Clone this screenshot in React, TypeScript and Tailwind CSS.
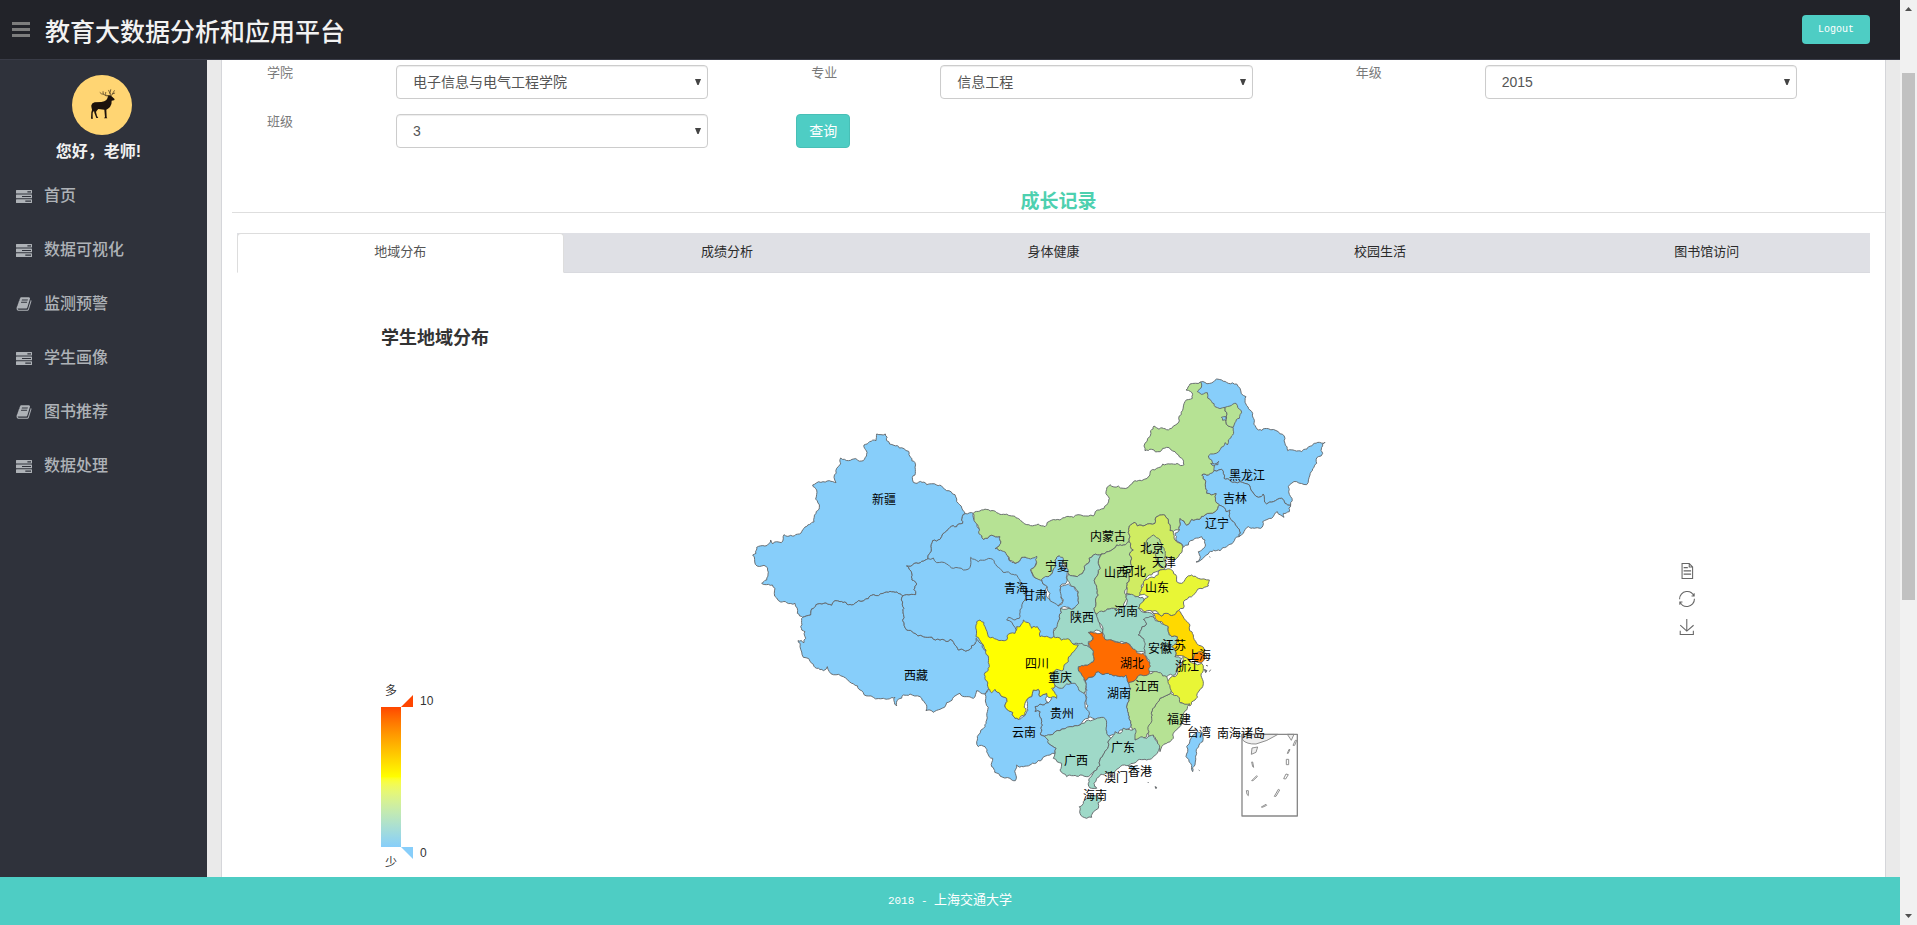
import React from "react";

type Frame = "w" | "e" | "ne" | "s";
type Region = { name: string; frame: Frame; fill: string; points: string };

// Survey sheets: every region is digitised on one of four sheets, three units per pixel.
const sheets: Record<Frame, [number, number]> = {
  w: [0, 180],
  e: [660, 360],
  ne: [1140, 0],
  s: [1230, 600],
};

const BLUE = "#87cefa";
const GREEN = "#b6e294";
const TEAL = "#9fd9c8";
const HEBEI = "#d0ec62";
const LIME = "#e8f636";

const regions: Region[] = [
  { name: "xinjiang", frame: "w", fill: BLUE, points: "410,42 436,42 440,62 462,76 478,84 492,86 506,94 512,112 525,128 526,155 517,172 520,187 560,194 590,195 620,212 645,224 655,250 668,270 676,281 667,290 668,310 650,320 630,322 608,342 600,358 578,362 574,385 564,416 545,424 500,438 508,448 516,462 516,480 530,492 522,508 527,524 500,524 488,528 450,514 430,520 400,524 385,536 355,542 335,555 300,545 285,542 275,556 228,554 212,585 188,592 172,580 165,550 140,548 110,534 105,505 85,493 65,490 80,480 72,436 46,433 38,405 48,400 50,382 92,360 98,372 124,368 132,344 152,346 222,306 228,280 238,262 230,210 218,195 268,182 288,188 282,172 290,145 302,114 325,122 370,122 376,112 372,75 408,62" },
  { name: "xizang", frame: "w", fill: BLUE, points: "188,592 212,585 228,554 275,556 285,542 300,545 335,555 355,542 385,536 400,524 430,520 450,514 488,528 484,540 492,565 488,602 500,630 520,638 550,650 600,660 625,664 630,658 650,680 655,690 690,688 705,672 708,650 730,655 760,700 770,800 750,805 735,822 710,812 700,835 660,820 638,835 620,848 600,868 558,872 555,850 540,830 510,822 490,825 475,838 470,858 464,852 465,832 430,835 400,832 385,828 365,812 335,790 310,770 262,740 250,752 215,730 190,712 180,680 174,662 192,668 197,655 182,620 185,595" },
  { name: "gansu", frame: "w", fill: BLUE, points: "564,416 574,385 578,362 600,358 608,342 630,322 650,320 668,310 667,290 676,281 700,280 715,325 730,358 780,350 782,372 765,386 800,404 825,430 845,412 865,412 885,402 893,410 888,430 872,450 880,470 905,478 922,500 930,540 955,558 970,540 958,520 962,500 985,492 1015,515 1016,550 995,570 962,565 958,590 940,640 944,670 880,680 830,670 790,640 720,560 600,480" },
  { name: "qinghai", frame: "w", fill: BLUE, points: "500,438 545,424 564,416 580,414 590,428 620,432 640,445 670,450 690,442 692,412 715,425 740,418 775,442 810,460 840,480 862,510 855,540 840,570 838,595 825,600 805,592 800,600 825,622 828,638 835,680 800,700 750,700 728,672 708,655 705,672 690,688 655,690 650,680 630,658 625,664 600,660 550,650 520,638 500,630 488,602 492,565 484,540 488,528 500,524 527,524 522,508 530,492 516,480 516,462 508,448" },
  { name: "heilongjiang", frame: "ne", fill: BLUE, points: "242,66 290,57 305,60 325,70 350,72 360,85 378,110 390,150 398,160 408,202 445,206 475,215 495,235 495,250 503,272 545,275 575,258 615,247 605,262 608,280 595,290 590,310 570,345 560,374 530,365 505,380 512,410 512,435 495,430 485,415 460,425 440,432 430,402 415,412 402,402 388,375 360,365 330,362 312,355 305,328 285,332 270,328 255,288 300,200 262,130 225,92" },
  { name: "jilin", frame: "ne", fill: BLUE, points: "245,345 265,345 285,332 305,328 312,355 330,362 360,365 388,375 402,402 415,412 430,402 440,432 460,425 485,415 495,430 512,435 508,455 490,460 492,472 472,455 455,475 428,485 422,505 385,500 370,520 357,530 345,490 330,450 318,455 298,435 288,400 260,400 257,365" },
  { name: "liaoning", frame: "ne", fill: BLUE, points: "298,435 318,455 330,450 345,490 357,530 320,560 300,572 265,582 240,602 228,606 240,595 235,575 255,560 255,540 245,530 225,535 205,555 190,562 168,540 165,520 178,510 180,475 200,495 215,478 255,465 285,455" },
  { name: "neimenggu", frame: "e", fill: GREEN, points: "40,100 120,103 160,108 190,128 235,132 255,140 300,120 340,112 400,108 440,75 448,55 438,35 450,14 475,18 505,22 525,2 545,2 570,-20 590,-35 630,-48 672,-46 665,-65 645,-85 620,-98 600,-85 575,-92 555,-88 552,-102 582,-162 615,-154 635,-155 658,-177 656,-185 675,-235 697,-245 692,-265 678,-270 690,-288 722,-294 725,-282 712,-265 730,-258 742,-262 755,-235 765,-220 795,-218 798,-175 805,-162 820,-155 818,-135 805,-120 802,-105 795,-112 745,-72 755,-60 762,-35 745,-15 725,-15 737,5 740,40 768,40 778,75 765,95 735,105 695,118 680,135 660,115 658,150 640,155 630,152 625,130 615,106 595,108 585,130 555,136 532,138 525,127 512,135 510,170 508,185 470,195 445,215 425,222 400,225 385,250 370,275 352,290 325,282 322,270 308,250 298,228 285,240 285,262 262,290 235,298 215,275 212,268 230,248 230,228 205,235 185,232 165,250 140,225 110,205 122,190 120,170 70,178 55,140" },
  { name: "elunchun", frame: "ne", fill: GREEN, points: "315,142 330,138 348,130 364,152 358,175 345,188 340,202 325,198 318,185" },
  { name: "jiagedaqi", frame: "ne", fill: BLUE, points: "304,172 318,170 318,182 308,181" },
  { name: "zhalaite", frame: "ne", fill: BLUE, points: "272,310 284,312 296,304 294,314 282,318" },
  { name: "ningxia", frame: "e", fill: BLUE, points: "245,298 262,290 285,262 285,240 298,228 308,232 308,250 325,270 322,300 315,312 300,318 302,340 308,365 295,378 270,362 262,320" },
  { name: "shaanxi", frame: "e", fill: TEAL, points: "400,225 425,222 415,250 415,280 405,310 415,345 408,370 408,402 415,420 420,435 428,460 390,455 398,478 385,485 385,500 350,500 330,490 280,475 280,455 298,410 302,385 335,388 356,370 355,335 330,312 322,300 325,282 352,290 370,275 385,250" },
  { name: "shanxi", frame: "e", fill: GREEN, points: "425,222 445,215 470,195 508,185 520,210 508,225 512,250 515,265 505,280 508,300 500,320 498,345 495,365 490,380 455,385 430,395 408,402 408,370 415,345 405,310 415,280 415,250" },
  { name: "hebei", frame: "e", fill: HEBEI, points: "512,135 525,127 532,138 555,136 585,130 595,108 615,106 625,130 630,152 640,155 645,180 668,200 655,230 635,240 620,230 615,245 618,262 600,270 575,285 555,300 545,325 540,345 500,342 500,320 508,300 505,280 515,265 512,250 508,225 520,210 508,185 510,170" },
  { name: "beijing", frame: "e", fill: GREEN, points: "580,165 600,180 605,200 590,218 565,215 555,198 560,182" },
  { name: "tianjin", frame: "e", fill: GREEN, points: "605,200 616,215 612,235 618,258 602,262 590,242 590,218" },
  { name: "henan", frame: "e", fill: TEAL, points: "500,340 520,345 548,352 550,365 535,385 555,398 580,405 582,415 550,418 560,432 540,455 535,465 552,478 555,520 530,515 515,500 500,488 470,485 435,478 428,460 410,402 430,395 455,385 490,380" },
  { name: "anhui", frame: "e", fill: TEAL, points: "552,418 578,410 600,425 625,440 625,455 635,470 652,470 655,490 635,500 645,530 665,535 652,560 645,585 620,590 590,585 580,575 565,575 565,550 560,530 555,515 552,478 535,465 540,455 560,432" },
  { name: "jiangsu", frame: "e", fill: "#ffd900", points: "575,395 605,408 620,400 640,405 655,390 672,415 690,435 700,465 710,490 733,510 735,520 725,540 700,535 670,528 645,530 635,500 650,490 652,470 635,470 625,455 625,440 605,425 585,415" },
  { name: "shandong", frame: "e", fill: LIME, points: "540,345 548,320 555,300 600,270 635,270 650,290 650,305 665,310 695,285 715,295 748,300 745,318 720,325 700,345 675,360 670,385 655,392 640,405 620,400 605,408 585,392 555,395 535,385 548,365 565,350" },
  { name: "zhejiang", frame: "e", fill: LIME, points: "655,560 668,530 690,545 700,550 725,550 730,565 730,610 712,640 705,660 690,678 665,668 650,665 640,640 622,605 645,590" },
  { name: "shanghai", frame: "e", fill: "#ff8400", points: "705,520 725,515 735,535 728,545 708,545 700,535" },
  { name: "fujian", frame: "e", fill: GREEN, points: "632,640 655,650 660,668 690,672 680,690 670,710 660,740 640,760 620,790 600,815 592,785 565,765 562,745 575,715 585,680 600,655" },
  { name: "jiangxi", frame: "e", fill: GREEN, points: "505,608 530,595 545,585 580,575 620,590 625,610 632,640 600,655 585,680 575,715 560,770 525,778 522,755 512,740 505,700 505,650 512,625" },
  { name: "hunan", frame: "e", fill: BLUE, points: "375,602 400,590 415,575 445,580 480,590 498,585 505,608 512,625 505,650 505,700 512,740 490,745 475,760 455,765 440,770 440,755 435,740 430,715 385,712 380,690 378,640" },
  { name: "hubei", frame: "e", fill: "#ff6c00", points: "385,457 428,458 435,478 470,487 500,488 515,503 530,518 550,520 562,540 568,580 545,585 530,595 505,608 498,585 480,590 445,580 415,575 400,590 375,602 365,585 355,560 375,555 400,545 400,515 385,490 400,478" },
  { name: "guizhou", frame: "e", fill: BLUE, points: "225,680 240,672 265,668 275,655 270,635 290,615 320,605 345,605 372,640 378,660 382,690 385,715 360,735 330,740 320,748 300,752 270,765 255,770 242,765 245,725 240,695 225,695" },
  { name: "chongqing", frame: "e", fill: TEAL, points: "345,490 385,500 400,515 400,545 375,555 355,560 365,585 375,605 372,640 355,625 345,610 320,612 305,625 290,620 278,605 262,585 285,555 305,560 318,540 325,515" },
  { name: "guangxi", frame: "e", fill: TEAL, points: "250,772 270,765 300,752 330,740 360,735 385,720 430,712 440,755 452,775 445,800 420,840 410,870 385,890 360,885 320,890 300,870 305,850 280,835 285,820 288,805 265,790" },
  { name: "guangdong", frame: "e", fill: TEAL, points: "452,775 465,755 480,760 490,745 525,745 525,780 560,775 580,765 592,785 592,820 560,840 520,850 470,868 440,880 410,895 402,910 410,925 395,925 385,910 392,892 410,870 420,840 445,800" },
  { name: "hainan", frame: "e", fill: TEAL, points: "370,965 390,950 410,945 425,955 415,985 395,1012 380,1015 360,1000 358,980" },
  { name: "yunnan", frame: "e", fill: BLUE, points: "90,620 105,628 140,655 165,715 175,718 198,700 200,660 215,650 220,630 235,628 240,650 260,640 265,668 240,672 225,680 225,695 240,695 245,725 242,765 265,790 288,805 285,820 270,825 245,840 210,855 170,855 166,880 166,902 150,895 120,888 95,860 98,835 75,800 55,800 50,785 55,765 75,740 80,720 78,670 75,642" },
  { name: "sichuan", frame: "e", fill: "#ffff00", points: "48,435 50,425 60,420 75,440 85,470 110,478 140,480 150,460 165,460 170,440 180,440 190,420 205,428 215,445 232,440 240,470 280,470 330,480 355,495 335,520 325,545 310,570 290,568 270,590 278,605 285,620 275,625 285,640 290,655 265,652 260,640 240,650 235,628 220,630 215,650 200,660 195,705 175,718 165,715 140,655 105,628 95,638 88,560 78,510 65,490 48,470" },
  { name: "taiwan", frame: "e", fill: BLUE, points: "712,755 730,760 728,785 710,820 705,855 698,875 692,850 678,830 680,800 690,780" },
  { name: "xianggang", frame: "e", fill: BLUE, points: "506,858 516,856 522,864 510,866" },
];

const labels: [string, Frame, number, number][] = [
  ["新疆", "w", 431, 239],
  ["西藏", "w", 529, 767],
  ["黑龙江", "ne", 381, 347],
  ["吉林", "ne", 345, 416],
  ["辽宁", "ne", 291, 493],
  ["内蒙古", "e", 443, 170],
  ["宁夏", "e", 291, 260],
  ["青海", "e", 168, 326],
  ["甘肃", "e", 226, 348],
  ["陕西", "e", 366, 415],
  ["山西", "e", 468, 280],
  ["河北", "e", 522, 275],
  ["北京", "e", 577, 206],
  ["天津", "e", 613, 248],
  ["山东", "e", 592, 325],
  ["河南", "e", 497, 397],
  ["安徽", "e", 600, 507],
  ["江苏", "e", 642, 497],
  ["上海", "e", 718, 527],
  ["浙江", "e", 681, 562],
  ["湖北", "e", 516, 551],
  ["江西", "e", 560, 622],
  ["湖南", "e", 478, 641],
  ["重庆", "e", 299, 594],
  ["四川", "e", 231, 551],
  ["贵州", "e", 306, 701],
  ["云南", "e", 192, 759],
  ["广西", "e", 348, 842],
  ["广东", "e", 488, 803],
  ["福建", "e", 657, 719],
  ["台湾", "e", 717, 759],
  ["南海诸岛", "e", 842, 761],
  ["香港", "e", 540, 876],
  ["澳门", "e", 467, 893],
  ["海南", "e", 404, 947],
];

type Pt = [number, number];

// Splits an edge into short uneven steps; the offset depends only on the edge's
// two ends, so neighbouring regions get the same border.
function roughen(a: Pt, b: Pt, out: Pt[]) {
  const swap = a[0] > b[0] || (a[0] === b[0] && a[1] > b[1]);
  const [p, q] = swap ? [b, a] : [a, b];
  const dx = q[0] - p[0];
  const dy = q[1] - p[1];
  const length = Math.hypot(dx, dy);
  if (length < 9) {
    out.push(b);
    return;
  }
  const seed = Math.sin(p[0] * 12.9898 + p[1] * 78.233 + q[0] * 37.719 + q[1] * 4.581) * 43758.5453;
  const offset = (seed - Math.floor(seed) - 0.5) * 0.42;
  const mid: Pt = [(p[0] + q[0]) / 2 - dy * offset, (p[1] + q[1]) / 2 + dx * offset];
  roughen(a, mid, out);
  roughen(mid, b, out);
}

function outline({ frame, points }: Region) {
  const [ox, oy] = sheets[frame];
  const corners = points.split(" ").map((pair) => {
    const [x, y] = pair.split(",").map(Number);
    return [x + ox, y + oy] as Pt;
  });
  const out: Pt[] = [];
  corners.forEach((corner, i) => roughen(corner, corners[(i + 1) % corners.length], out));
  return "M" + out.map(([x, y]) => `${x.toFixed(1)} ${y.toFixed(1)}`).join("L") + "Z";
}

function ChinaMap() {
  return (
    <svg viewBox="0 0 600 470" className="h-[470px] w-[600px] shrink-0" role="img" aria-label="学生地域分布">
      <g transform="scale(0.33333)" stroke="#63676a" strokeWidth="2.8" strokeLinejoin="round">
        {regions.map((region) => (
          <path key={region.name} d={outline(region)} fill={region.fill} />
        ))}
        <g transform="translate(660 360)" fill="#777">
          <path d="M733 568l8 4-4 6zM738 556l6 2M748 575l4-6M716 870l3 2M563 906l3 3M585 920l5 2-2 4zM748 230l3 2" />
        </g>
        <g transform="translate(1230 600)" fill="none" stroke="#888">
          <path d="M276 523L278 540Q290 553 318 552Q350 545 384 523Z" fill="#eee" />
          <path d="M412 523L424 541L432 523Z" fill="#eee" />
          <path d="M306 564L323 561L318 577L304 583Z" fill="#eee" />
          <path d="M276 523H442V768H276Z" strokeWidth="4" />
          <path d="M429 556L436 541L440 541L434 556ZM412 580L417 568L420 569L414 581ZM409 598H416V614H409ZM401 656L408 642L415 644L407 657ZM373 709L385 688L389 690L378 709ZM334 741L348 733L350 736L337 742ZM289 692H295V707L291 703ZM305 662L320 647L322 650L309 662ZM305 606L308 606L311 622L308 620Z" />
        </g>
      </g>
      <g fontSize="12" fill="#000" textAnchor="middle">
        {labels.map(([text, frame, x, y]) => (
          <text key={text} x={Math.round((sheets[frame][0] + x) / 3)} y={Math.round((sheets[frame][1] + y) / 3) + 4}>
            {text}
          </text>
        ))}
      </g>
    </svg>
  );
}

function TasksIcon() {
  return (
    <svg viewBox="0 0 16 13" className="h-[13px] w-4" fill="currentColor">
      <path fillRule="evenodd" d="M.5 0h15q.5 0 .5.5v2.6q0 .5-.5.5H.5q-.5 0-.5-.5V.5Q0 0 .5 0ZM11.4 1.2v1.2H15V1.2ZM.5 4.6h15q.5 0 .5.5v2.7q0 .5-.5.5H.5q-.5 0-.5-.5V5.1q0-.5.5-.5ZM6 5.9V7h9V5.9ZM.5 9.3h15q.5 0 .5.5v2.6q0 .5-.5.5H.5q-.5 0-.5-.5V9.8q0-.5.5-.5ZM9.3 10.5v1.2H15v-1.2Z" />
    </svg>
  );
}

function BookIcon() {
  return (
    <svg viewBox="0 0 1792 1792" className="size-4" fill="currentColor">
      <path d="M1703 478q40 57 18 129l-275 906q-19 64-76.5 107.5T1247 1664H324q-77 0-148.5-53.5T76 1479q-24-67-2-127 0-4 3-27t4-37q1-8-3-21.5t-3-19.5q2-11 8-21t16.5-23.5T116 1179q23-38 45-91.5t30-91.5q3-10 .5-30t-.5-28q3-11 17-28t17-23q21-36 42-92t25-90q1-9-2.5-32t.5-28q4-13 22-30.5t22-22.5q19-26 42.5-84.5T404 411q1-8-3-25.5t-2-26.5q2-8 9-18t18-23 17-21q8-12 16.5-30.5t15-35 16-36 19.5-32 26.5-23.5 36-11.5T620 134l-1 3q38-9 51-9h761q74 0 114 56t18 130l-274 906q-36 119-71.5 153.5T1089 1408H220q-27 0-38 15-11 16-1 43 24 70 144 70h923q29 0 56-15.5t35-41.5l300-987q7-22 5-57 38 15 59 43zm-1064 2q-4 13 2 22.5t20 9.5h608q13 0 25.5-9.5T1311 480l21-64q4-13-2-22.5t-20-9.5H702q-13 0-25.5 9.5T660 416zm-83 256q-4 13 2 22.5t20 9.5h608q13 0 25.5-9.5T1228 736l21-64q4-13-2-22.5t-20-9.5H619q-13 0-25.5 9.5T577 672z" />
    </svg>
  );
}

function Avatar() {
  return (
    <svg viewBox="0 0 180 180" className="ml-[7px] size-[60px]" role="img" aria-label="头像">
      <circle cx="90" cy="90" r="90" fill="#ffd573" />
      <path
        fill="#1c120c"
        d="M58 91Q60 84 68 82L88 81Q98 80 103 75Q107 70 108 64L104 62L110 61Q114 60 117 62L127 71Q129 74 126 76L119 77Q120 88 114 96Q109 101 103 104L104 127L106 130H96L99 126L97 104L79 102Q74 106 72 111L75 123L79 129H73L67 113L66 107L62 113L62 127L63 131H57L58 112Q61 103 60 95L58 104Z"
      />
      <path d="M110 63Q100 64 95 58Q88 58 84 53M95 58Q92 55 93 50M102 62Q99 56 101 52M115 62Q113 53 116 44M117 62Q122 54 128 54M114 56L110 46M121 57L127 47" fill="none" stroke="#4c3920" strokeWidth="2.2" strokeLinecap="round" />
    </svg>
  );
}

const menu = [
  { text: "首页", icon: <TasksIcon /> },
  { text: "数据可视化", icon: <TasksIcon /> },
  { text: "监测预警", icon: <BookIcon /> },
  { text: "学生画像", icon: <TasksIcon /> },
  { text: "图书推荐", icon: <BookIcon /> },
  { text: "数据处理", icon: <TasksIcon /> },
];

function Field({ id, label, value }: { id: string; label: string; value: string }) {
  return (
    <div className="flex items-start pr-[68px] pl-[35px]">
      <label htmlFor={id} className="w-[129px] shrink-0 text-[13px] leading-4 text-[#797979]">
        {label}
      </label>
      <div className="relative flex-1">
        <select
          id={id}
          defaultValue={value}
          className="block h-[34px] w-full appearance-none rounded border border-[#ccc] bg-white pl-4 text-sm text-[#555] shadow-[inset_0_1px_1px_rgba(0,0,0,0.075)]"
        >
          <option>{value}</option>
        </select>
        <svg viewBox="0 0 6 6" className="pointer-events-none absolute top-[14px] right-[7px] size-[6px]" fill="#444">
          <path d="M0 0H6L3.6 6H2.4Z" />
        </svg>
      </div>
    </div>
  );
}

const tabs = ["地域分布", "成绩分析", "身体健康", "校园生活", "图书馆访问"];

const tools = [
  { name: "数据视图", d: "M17.5,17.3H33 M45.4,29.5h-28 M11.5,2v56H51V14.8L38.4,2H11.5z M38.4,2.2v12.7H51 M45.4,41.7h-28" },
  { name: "还原", d: "M47,18.9h9.8V8.7 M56.3,20.1 C52.1,9,40.5,0.6,26.8,2.1C12.6,3.7,1.6,16.2,2.1,30.6 M13,41.1H3.1v10.2 M3.7,39.9c4.2,11.1,15.8,19.5,29.5,18 c14.2-1.6,25.2-14.1,24.7-28.5" },
  { name: "保存为图片", d: "M4.7,22.9L29.3,45.5L54.7,23.4M4.6,43.6L4.6,58L53.8,58L53.8,43.6M29.2,45.1L29.2,0" },
];

function ScaleLegend() {
  return (
    <div className="mt-auto mb-[6px] flex text-xs text-[#333]">
      <div className="flex w-5 flex-col items-center">
        <span className="leading-4">多</span>
        <div className="my-2 h-[140px] w-5 bg-linear-to-t from-[#87cefa] via-[#ffff00] to-[#ff4500]" />
        <span className="leading-4">少</span>
      </div>
      <div className="flex flex-col justify-between py-3">
        <div className="flex h-3 items-center gap-[7px]">
          <svg viewBox="0 0 12 12" className="size-3" fill="#ff4500">
            <path d="M0 12L12 0V12Z" />
          </svg>
          <span>10</span>
        </div>
        <div className="flex h-3 items-center gap-[7px]">
          <svg viewBox="0 0 12 12" className="size-3" fill="#87cefa">
            <path d="M0 0H12V12Z" />
          </svg>
          <span>0</span>
        </div>
      </div>
    </div>
  );
}

export default function App() {
  return (
    <div className="flex h-screen overflow-hidden bg-[#eaeaea] font-['Liberation_Sans','Noto_Sans_CJK_SC',sans-serif]">
      <div className="flex min-w-0 flex-1 flex-col">
        <header className="flex h-[60px] shrink-0 items-center border-b border-[#393b46] bg-[#222329] pr-[30px] pl-3">
          <button aria-label="菜单" className="text-[#7d7d7d]">
            <svg viewBox="0 0 18 15" className="h-[15px] w-[18px]" fill="currentColor">
              <path d="M0 0h18v3H0zM0 6h18v3H0zM0 12h18v3H0z" />
            </svg>
          </button>
          <h1 className="ml-[15px] pt-1 text-[25px] leading-8 font-medium text-[#f2f2f2]">教育大数据分析和应用平台</h1>
          <button className="ml-auto h-[29px] w-[68px] rounded bg-[#4ecdc4] font-['Liberation_Mono',monospace] text-[10px] text-white">
            Logout
          </button>
        </header>

        <div className="flex min-h-0 flex-1">
          <aside className="w-[207px] shrink-0 bg-[#2f323b]">
            <div className="flex w-[197px] flex-col items-center pt-[15px]">
              <Avatar />
              <p className="mt-[7px] text-base leading-5 font-bold text-[#f2f2f2]">您好，老师!</p>
            </div>
            <nav className="mt-[7px]">
              {menu.map(({ text, icon }) => (
                <a key={text} href="#" className="flex h-[54px] items-center pl-4 text-base font-medium text-[#aeb2b7]">
                  <span className="flex w-[28px]">{icon}</span>
                  {text}
                </a>
              ))}
            </nav>
          </aside>

          <main className="mx-[14px] flex min-w-0 flex-1 flex-col border-x border-[#d5d6da] bg-white">
            <form className="mr-[20px] ml-[10px] grid grid-cols-3 gap-y-[15px] pt-[5px]" onSubmit={(e) => e.preventDefault()}>
              <Field id="college" label="学院" value="电子信息与电气工程学院" />
              <Field id="major" label="专业" value="信息工程" />
              <Field id="grade" label="年级" value="2015" />
              <Field id="class" label="班级" value="3" />
              <div className="pl-5">
                <button className="h-[34px] w-[54px] rounded border border-[#48bfb6] bg-[#4ecdc4] text-sm text-white">查询</button>
              </div>
            </form>

            <h2 className="mt-11 ml-[10px] border-b border-[#dedede] text-center text-[19px] leading-5 font-bold text-[#4dd0af]">
              成长记录
            </h2>

            <div role="tablist" className="mx-[15px] mt-5 grid h-10 shrink-0 grid-cols-5 bg-[#dfe0e5] text-[13px] text-[#2a2a2a]">
              {tabs.map((tab, i) => (
                <button
                  key={tab}
                  role="tab"
                  aria-selected={i === 0}
                  className={
                    i === 0
                      ? "rounded-t-sm border border-[#ddd] border-b-white bg-white pb-[2px] text-[#555]"
                      : "border-y border-t-[#dfe0e5] border-b-[#d9dadf] pb-[2px]"
                  }
                >
                  {tab}
                </button>
              ))}
            </div>

            <section className="mr-[190px] ml-[159px] flex min-h-0 flex-1">
              <div className="flex w-[359px] shrink-0 flex-col">
                <h3 className="mt-[53px] text-lg leading-6 font-bold text-[#333]">学生地域分布</h3>
                <ScaleLegend />
              </div>
              <div className="pt-[87px]">
                <ChinaMap />
              </div>
              <div className="ml-auto flex flex-col gap-3 pt-[290px]">
                {tools.map(({ name, d }) => (
                  <button key={name} aria-label={name} className="size-4">
                    <svg viewBox="0 0 60 60" className="size-4 overflow-visible" fill="none" stroke="#666" strokeWidth="4">
                      <path d={d} />
                    </svg>
                  </button>
                ))}
              </div>
            </section>
          </main>
        </div>

        <footer className="flex h-12 shrink-0 items-center justify-center bg-[#4ecdc4] font-['Liberation_Mono','Noto_Sans_CJK_SC',monospace] text-[13px] text-white">
          <p>
            <span className="text-[11px]">2018 - </span>上海交通大学
          </p>
        </footer>
      </div>

      <div className="flex w-[17px] shrink-0 flex-col items-center bg-[#f1f1f1] py-[7px]">
        <svg viewBox="0 0 7 4" className="h-1 w-[7px]" fill="#505050">
          <path d="M0 4L3.5 0L7 4Z" />
        </svg>
        <div className="mt-[62px] h-[527px] w-[13px] shrink-0 bg-[#c1c1c1]" />
        <svg viewBox="0 0 7 4" className="mt-auto h-1 w-[7px]" fill="#505050">
          <path d="M0 0H7L3.5 4Z" />
        </svg>
      </div>
    </div>
  );
}
